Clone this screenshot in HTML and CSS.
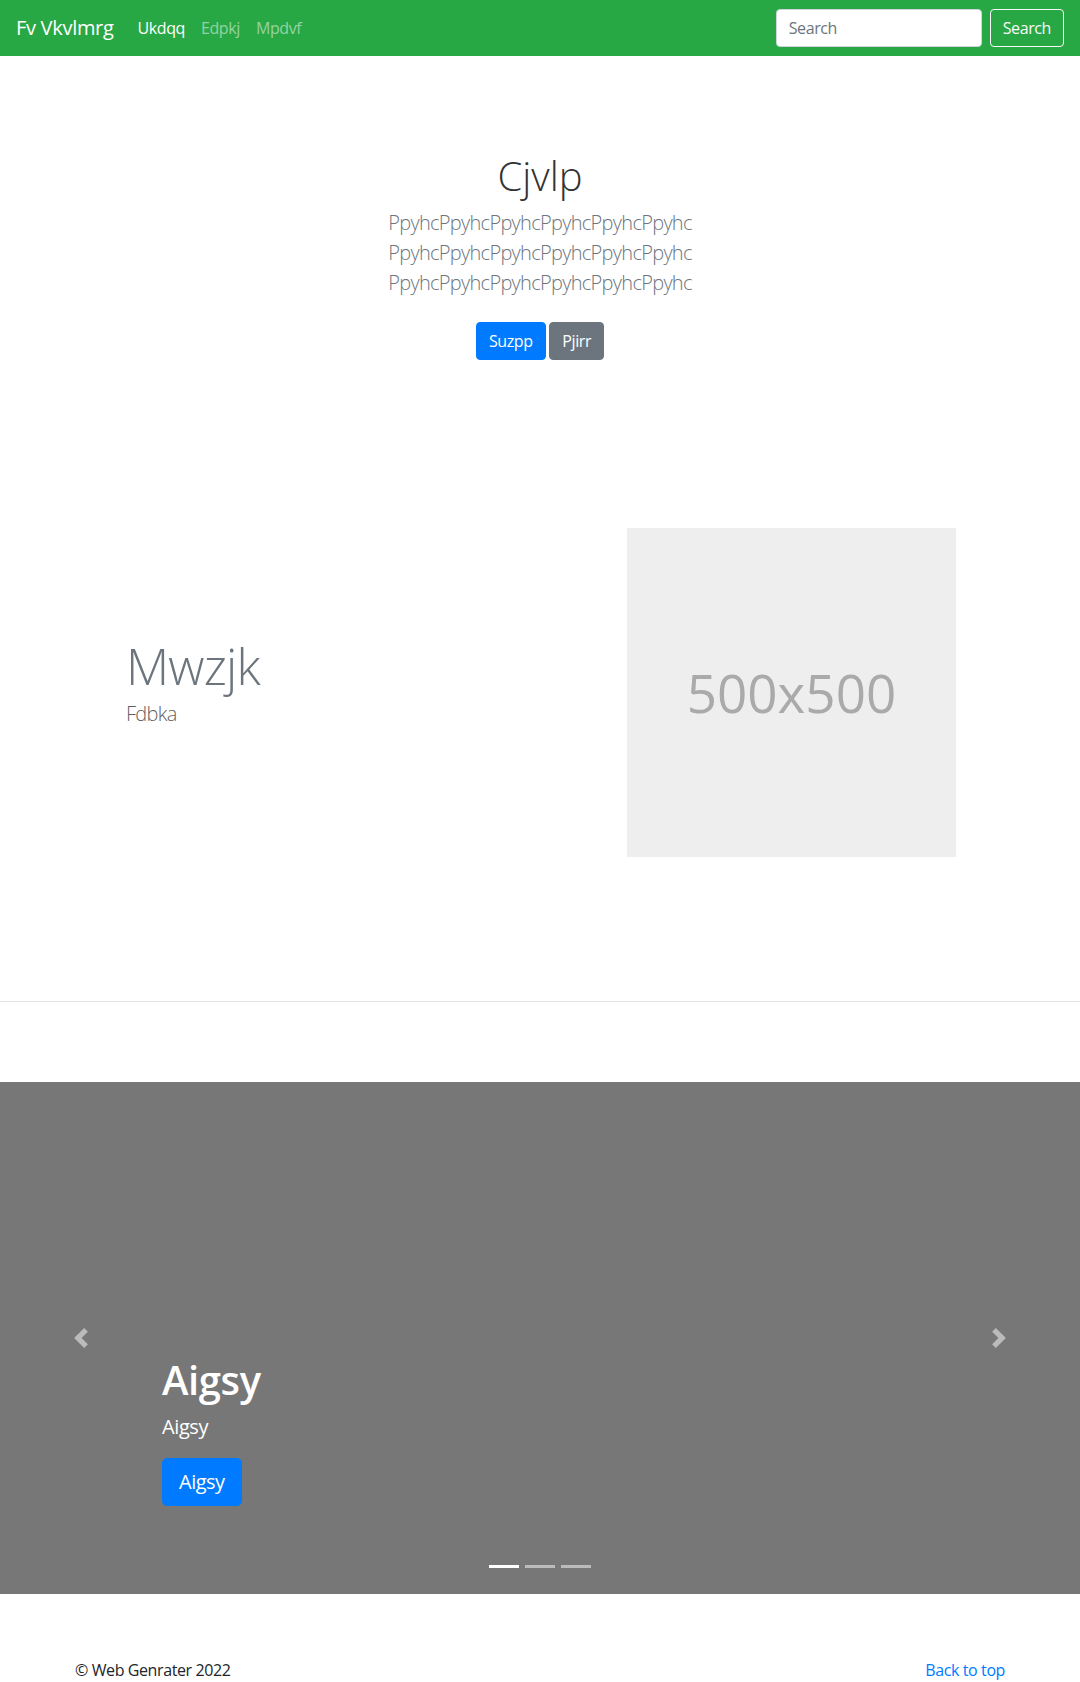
FILE: index.html
```html
<!DOCTYPE html>
<html lang="en">
<head>
<meta charset="utf-8">
<title>Fv Vkvlmrg</title>
<link rel="stylesheet" href="styles.css">
</head>
<body>
<nav class="navbar">
  <a class="brand" href="#">Fv Vkvlmrg</a>
  <ul class="nav">
    <li><a class="nav-link active" href="#">Ukdqq</a></li>
    <li><a class="nav-link" href="#">Edpkj</a></li>
    <li><a class="nav-link" href="#">Mpdvf</a></li>
  </ul>
  <form class="search">
    <input class="search-input" type="search" placeholder="Search">
    <button class="btn btn-outline-light" type="button">Search</button>
  </form>
</nav>
<main>
  <section class="hero">
    <h1 class="hero-title">Cjvlp</h1>
    <p class="lead hero-lead">PpyhcPpyhcPpyhcPpyhcPpyhcPpyhc PpyhcPpyhcPpyhcPpyhcPpyhcPpyhc PpyhcPpyhcPpyhcPpyhcPpyhcPpyhc</p>
    <p class="hero-actions"><a class="btn btn-primary" href="#">Suzpp</a> <a class="btn btn-secondary" href="#">Pjirr</a></p>
  </section>
  <section class="featurette">
    <div class="featurette-text">
      <h2 class="featurette-heading">Mwzjk</h2>
      <p class="lead featurette-lead">Fdbka</p>
    </div>
    <div class="placeholder">500x500</div>
  </section>
  <hr class="divider">
  <div class="carousel">
    <a class="carousel-control control-prev" href="#">
      <svg width="20" height="20" viewBox="0 0 8 8"><path fill="#fff" d="M5.25 0l-4 4 4 4 1.5-1.5-2.5-2.5 2.5-2.5-1.5-1.5z"/></svg>
    </a>
    <a class="carousel-control control-next" href="#">
      <svg width="20" height="20" viewBox="0 0 8 8"><path fill="#fff" d="M2.75 0l-1.5 1.5 2.5 2.5-2.5 2.5 1.5 1.5 4-4-4-4z"/></svg>
    </a>
    <div class="carousel-caption">
      <h1 class="caption-title">Aigsy</h1>
      <p class="caption-text">Aigsy</p>
      <p class="caption-actions"><a class="btn btn-lg btn-primary" href="#">Aigsy</a></p>
    </div>
    <ol class="indicators">
      <li class="indicator active"></li>
      <li class="indicator"></li>
      <li class="indicator"></li>
    </ol>
  </div>
</main>
<footer class="footer">
  <p class="footer-copy">© Web Genrater 2022</p>
  <p class="footer-copy"><a class="footer-link" href="#">Back to top</a></p>
</footer>
</body>
</html>
```

FILE: styles.css
```css
* { box-sizing: border-box; }

body {
  margin: 0;
  font-family: "Open Sans", "Noto Sans", sans-serif;
  font-size: 16px;
  line-height: 1.5;
  letter-spacing: -0.025em;
  color: #212529;
  background: #fff;
}

a { text-decoration: none; }

.navbar {
  display: flex;
  align-items: center;
  height: 56px;
  padding: 0 16px;
  background: #28a745;
}

.brand {
  font-size: 20px;
  line-height: 30px;
  letter-spacing: -0.015em;
  color: #fff;
  margin-right: 16px;
}

.nav {
  display: flex;
  list-style: none;
  margin: 0;
  padding: 0;
}

.nav-link {
  display: block;
  padding: 8px;
  color: rgba(255, 255, 255, 0.5);
}

.nav-link.active { color: #fff; }

.search {
  margin-left: auto;
  display: flex;
  align-items: center;
}

.search-input {
  width: 206px;
  height: 38px;
  padding: 6px 12px;
  margin-right: 8px;
  border: 1px solid #ced4da;
  border-radius: 4px;
  font-family: inherit;
  font-size: 16px;
  letter-spacing: -0.025em;
  color: #495057;
  background: #fff;
}

.search-input::placeholder { color: #6c757d; }

.btn {
  display: inline-block;
  padding: 6px 12px;
  font-family: inherit;
  font-size: 16px;
  line-height: 24px;
  letter-spacing: -0.025em;
  border: 1px solid transparent;
  border-radius: 4px;
  text-align: center;
  vertical-align: middle;
}

.btn-outline-light {
  color: #f8f9fa;
  border-color: #f8f9fa;
  background: transparent;
}

.btn-primary { color: #fff; background: #007bff; border-color: #007bff; }
.btn-secondary { color: #fff; background: #6c757d; border-color: #6c757d; }

.btn-lg {
  padding: 8px 16px;
  font-size: 20px;
  line-height: 30px;
  border-radius: 5px;
}

.hero {
  padding-top: 96px;
  text-align: center;
}

.hero-title {
  margin: 0 0 8px;
  font-size: 40px;
  font-weight: 300;
  line-height: 1.2;
  letter-spacing: 0;
  color: #333;
}

.lead {
  font-size: 20px;
  font-weight: 300;
  line-height: 30px;
  letter-spacing: -0.035em;
}

.hero-lead {
  width: 450px;
  margin: 0 auto 16px;
  color: #6c757d;
}

.hero-actions { margin: 0 0 16px; }
.hero-actions .btn { margin: 8px 0; }

.featurette {
  display: flex;
  align-items: center;
  padding: 144px 124px 144px 126px;
}

.featurette-text { flex: 1; }

.featurette-heading {
  margin: 0 0 8px;
  font-size: 50px;
  font-weight: 300;
  line-height: 1;
  letter-spacing: -0.8px;
  color: #6c757d;
}

.featurette-lead {
  margin: 0 0 16px;
  color: #5f5f5f;
}

.placeholder {
  width: 329px;
  height: 329px;
  display: flex;
  align-items: center;
  justify-content: center;
  background: #eee;
  color: #aaa;
  font-size: 53px;
  letter-spacing: 0;
}

.divider {
  margin: 0;
  border: 0;
  border-top: 1px solid rgba(0, 0, 0, 0.1);
}

.carousel {
  position: relative;
  height: 512px;
  margin: 80px 0 64px;
  background: #777;
}

.carousel-control {
  position: absolute;
  top: 0;
  bottom: 0;
  width: 15%;
  display: flex;
  align-items: center;
  justify-content: center;
  opacity: 0.5;
}

.control-prev { left: 0; }
.control-next { right: 0; }

.carousel-caption {
  position: absolute;
  left: 15%;
  right: 15%;
  bottom: 52px;
  padding: 20px 0;
  color: #fff;
  z-index: 10;
}

.caption-title {
  margin: 0 0 8px;
  font-size: 40px;
  font-weight: 600;
  line-height: 1.2;
}

.caption-text {
  margin: 0 0 16px;
  font-size: 20px;
  line-height: 30px;
}

.caption-actions { margin: 0 0 16px; }

.indicators {
  position: absolute;
  left: 0;
  right: 0;
  bottom: 26px;
  display: flex;
  justify-content: center;
  gap: 6px;
  margin: 0;
  padding: 0;
  list-style: none;
}

.indicator {
  width: 30px;
  height: 3px;
  background: rgba(255, 255, 255, 0.5);
}

.indicator.active { background: #fff; }

.footer {
  width: 960px;
  margin: 0 auto;
  padding: 0 15px;
  display: flex;
  justify-content: space-between;
}

.footer-copy { margin: 0 0 16px; }
.footer-link { color: #007bff; }
```
